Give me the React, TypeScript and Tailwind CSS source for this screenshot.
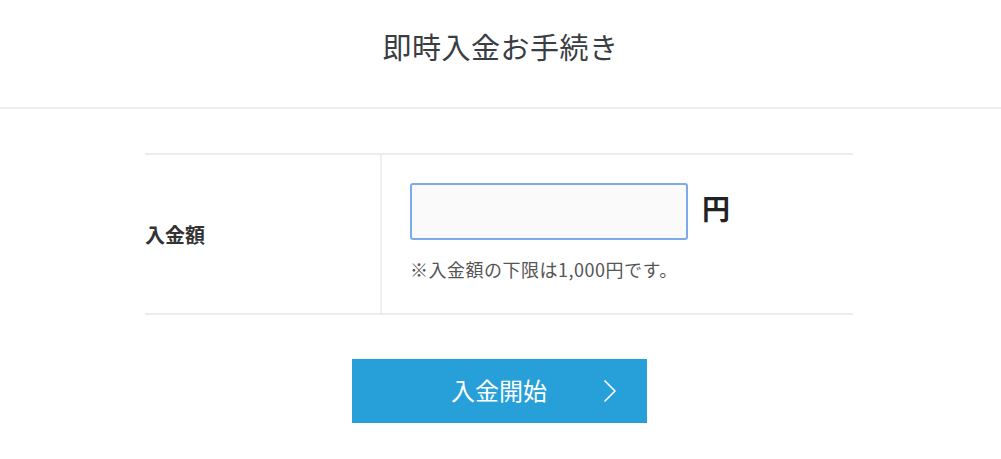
import { ChevronRight } from 'lucide-react';

const font = { fontFamily: '"Noto Sans CJK JP", "Noto Sans", sans-serif' };

export default function App() {
  return (
    <div className="min-h-screen bg-white text-[#333]" style={font}>
      <header className="h-[109px] flex items-center justify-center border-b-2 border-[#efefef]">
        <h1 className="text-[29px] leading-none tracking-[0.5px] text-[#3a3d42] -mt-[15px]">即時入金お手続き</h1>
      </header>

      <main className="w-[708px] ml-[145px] pt-[44px]">
        <div className="flex border-y-2 border-[#ececec]">
          <div className="w-[237px] border-r-2 border-[#efefef] flex items-center">
            <span className="text-[20px] font-bold text-[#333] mt-[2px]">入金額</span>
          </div>
          <div className="flex-1 pl-[28px] pt-[28px] pb-[32px]">
            <div className="flex items-center">
              <input
                type="text"
                className="w-[278px] h-[57px] bg-[#fafafa] border-2 border-[#7eaaea] rounded-[3px] outline-none px-3"
              />
              <span className="ml-[14px] -mt-[8px] text-[28px] font-bold text-[#222]">円</span>
            </div>
            <p className="mt-[17px] text-[18px] leading-[24px] tracking-[0.5px] text-[#555]">※入金額の下限は1,000円です。</p>
          </div>
        </div>

        <div className="flex justify-center mt-[44px]">
          <button className="relative w-[295px] h-[64px] bg-[#279fd9] text-white flex items-center justify-center">
            <span className="text-[24px] -mt-[3px]">入金開始</span>
            <ChevronRight className="absolute right-[17px] top-1/2 -translate-y-1/2 w-[40px] h-[40px]" strokeWidth={1} />
          </button>
        </div>
      </main>
    </div>
  );
}
